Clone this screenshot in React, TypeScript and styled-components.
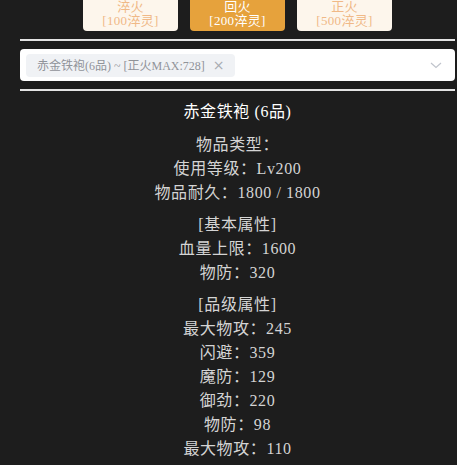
import { createGlobalStyle, styled } from "styled-components";

const GlobalStyle = createGlobalStyle`
  html, body {
    margin: 0;
    padding: 0;
    background: #1d1d1d;
    overflow: hidden;
  }
  body {
    font-family: "Liberation Serif", "Noto Sans CJK SC", serif;
  }
`;

const Page = styled.div`
  width: 435px;
  margin-left: 20px;
  height: 465px;
  overflow: hidden;
`;

const ButtonRow = styled.div`
  display: flex;
  justify-content: center;
  gap: 12px;
  margin-top: -4px;
`;

const FireButton = styled.button<{ $active?: boolean }>`
  width: 95px;
  padding: 4px 0 3px;
  border: none;
  border-radius: 4px;
  background: ${(p) => (p.$active ? "#e6a23c" : "#fdf6ec")};
  color: ${(p) => (p.$active ? "#ffffff" : "#f0b987")};
  font-family: "Liberation Serif", "Noto Sans CJK SC", serif;
  font-size: 13px;
  line-height: 14px;
  letter-spacing: 0.3px;
  text-align: center;
  cursor: pointer;
`;

const Divider = styled.div`
  height: 2px;
  background: #e4e4e4;
  margin: 8px 0;
`;

const SelectBox = styled.div`
  height: 32px;
  background: #ffffff;
  border-radius: 4px;
  display: flex;
  align-items: center;
  padding: 0 12px 0 6px;
  box-sizing: border-box;
`;

const Tag = styled.span`
  display: inline-flex;
  align-items: center;
  gap: 8px;
  height: 23px;
  padding: 0 10px 0 11px;
  background: #f0f2f5;
  border-radius: 4px;
  color: #909399;
  font-size: 12px;
  font-family: "Liberation Serif", "Noto Sans CJK SC", serif;
`;

const Close = styled.span`
  font-size: 14px;
  color: #a8abb2;
  font-family: "DejaVu Sans", sans-serif;
`;

const Arrow = styled.svg`
  margin-left: auto;
`;

const Detail = styled.div`
  text-align: center;
  color: #d4d4d4;
  font-size: 16px;
  line-height: 24px;
  letter-spacing: 0.6px;
`;

const Title = styled.div`
  color: #ffffff;
  margin-top: 9px;
`;

const Group = styled.div<{ $first?: boolean }>`
  margin-top: ${(p) => (p.$first ? "9px" : "8px")};
`;

const Line = styled.div``;

const buttons = [
  { name: "淬火", cost: "[100淬灵]" },
  { name: "回火", cost: "[200淬灵]", active: true },
  { name: "正火", cost: "[500淬灵]" },
];

const groups = [
  ["物品类型：", "使用等级：Lv200", "物品耐久：1800 / 1800"],
  ["[基本属性]", "血量上限：1600", "物防：320"],
  [
    "[品级属性]",
    "最大物攻：245",
    "闪避：359",
    "魔防：129",
    "御劲：220",
    "物防：98",
    "最大物攻：110",
  ],
];

export default function App() {
  return (
    <>
      <GlobalStyle />
      <Page>
        <ButtonRow>
          {buttons.map((b) => (
            <FireButton key={b.name} $active={b.active}>
              {b.name}
              <br />
              {b.cost}
            </FireButton>
          ))}
        </ButtonRow>
        <Divider />
        <SelectBox>
          <Tag>
            赤金铁袍(6品) ~ [正火MAX:728]
            <Close>×</Close>
          </Tag>
          <Arrow width="14" height="14" viewBox="0 0 14 14">
            <path d="M2 5 L7 9.5 L12 5" fill="none" stroke="#c0c4cc" strokeWidth="1.2" />
          </Arrow>
        </SelectBox>
        <Divider />
        <Detail>
          <Title>赤金铁袍 (6品)</Title>
          {groups.map((g, i) => (
            <Group key={i} $first={i === 0}>
              {g.map((t, j) => (
                <Line key={j}>{t}</Line>
              ))}
            </Group>
          ))}
        </Detail>
      </Page>
    </>
  );
}
